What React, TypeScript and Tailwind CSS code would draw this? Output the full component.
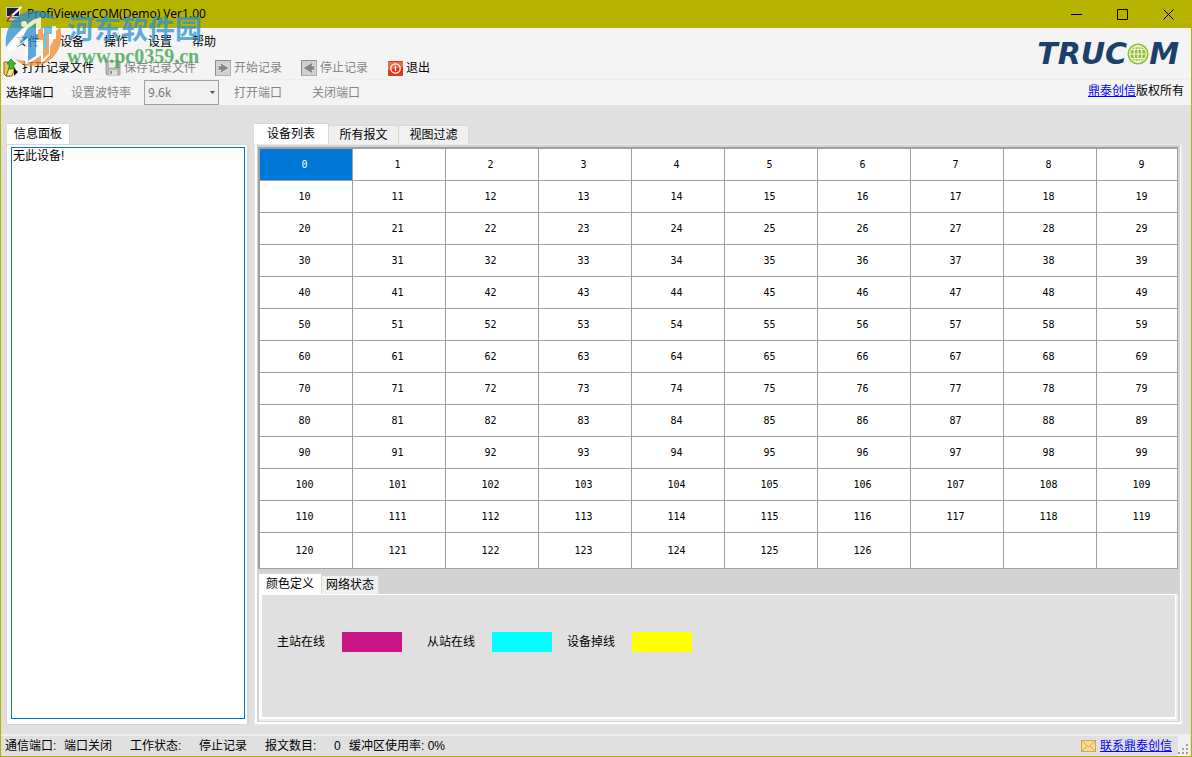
import React, { useState } from 'react';
import clsx from 'clsx';

const MENUS = ['文件', '设备', '操作', '设置', '帮助'];
const DEVICE_TABS = ['设备列表', '所有报文', '视图过滤'];
const LEGEND_TABS = ['颜色定义', '网络状态'];
const LEGEND = [
  { label: '主站在线', color: 'bg-[#c71585]', space: 'mr-[25px]' },
  { label: '从站在线', color: 'bg-[#00ffff]', space: 'mr-[15px]' },
  { label: '设备掉线', color: 'bg-[#ffff00]', space: '' },
];
const LAST_DEVICE = 126;
const ROWS = Array.from({ length: 13 }, (_, row) => Array.from({ length: 10 }, (_, col) => row * 10 + col));

const AppIcon = () => (
  <svg width="16" height="16" viewBox="0 0 16 16">
    <rect x="0.5" y="1.5" width="13" height="9" fill="#1c2030" stroke="#c8c8d8" />
    <path d="M3 12h9l2 3H1z" fill="#d8d8e0" stroke="#333" strokeWidth="0.8" />
    <path d="M15 0 4 10l-2 4 3-2L16 2z" fill="#fff" />
    <path d="M6 9l-5 6" stroke="#d02020" strokeWidth="1.5" />
  </svg>
);

const OpenIcon = () => (
  <svg width="16" height="18" viewBox="0 0 16 18">
    <path d="M1 3h5l2 2v12H3l-2-2z" fill="#e9c95a" stroke="#8a6a18" />
    <path d="M3 17 6 9h6l-3 8z" fill="#f7e28e" stroke="#8a6a18" />
    <path d="M8 0l5 5h-2v5H6V5H4z" fill="#3dbb2c" stroke="#1c7a14" strokeWidth="0.7" />
    <path d="M11 9l4 4-4 4z" fill="#111" />
  </svg>
);

const SaveIcon = () => (
  <svg width="16" height="16" viewBox="0 0 16 16">
    <path d="M1 1h14v14H2l-1-1z" fill="#b4b4b4" stroke="#a0a0a0" />
    <rect x="4" y="1.5" width="8" height="6" fill="#ececec" />
    <rect x="4" y="10" width="8" height="5" fill="#dedede" />
    <rect x="5" y="11" width="2" height="3" fill="#8c8c8c" />
  </svg>
);

const RecordIcon = ({ back }: { back?: boolean }) => (
  <svg width="16" height="16" viewBox="0 0 16 16">
    <rect x="0.5" y="0.5" width="15" height="15" fill="#d0d0d0" stroke="#b0b0b0" />
    <path d="M0.5 15.5V0.500H15.500" fill="none" stroke="#8c8c8c" />
    {back ? (
      <path d="M2 8l10-6-1 4h4l-2 2 2 2h-4l1 4z" fill="#858585" stroke="#efefef" strokeWidth="0.6" />
    ) : (
      <path d="M14 8 4 2l2 4H1l3 2-3 2h5l-2 4z" fill="#858585" stroke="#efefef" strokeWidth="0.6" />
    )}
  </svg>
);

const ExitIcon = () => (
  <svg width="15" height="15" viewBox="0 0 15 15">
    <rect width="15" height="15" rx="1" fill="#d8391b" />
    <path d="M0 1h15v5L0 9z" fill="#ee6a48" />
    <circle cx="7.5" cy="7.5" r="4.7" fill="none" stroke="#fff" strokeWidth="1.3" />
    <path d="M7.5 5v5" stroke="#fff" strokeWidth="1.3" />
  </svg>
);

const GlobeIcon = () => (
  <svg width="22" height="22" viewBox="0 0 22 22" fill="none" stroke="#f4f4f4" strokeWidth="1.2">
    <circle cx="11" cy="11" r="10.5" fill="#8fc31f" stroke="none" />
    <circle cx="11" cy="11" r="8.3" />
    <ellipse cx="11" cy="11" rx="4" ry="8.3" />
    <path d="M11 2.700v16.600M3 11h16M4.500 6.500h13M4.500 15.500h13" />
  </svg>
);

const MailIcon = () => (
  <svg width="15" height="12" viewBox="0 0 15 12">
    <rect x="0.5" y="0.5" width="14" height="11" fill="#f6dc8c" stroke="#c9a862" />
    <path d="M1 11l5-5M14 11 9 6M1 1l6.500 6L14 1" fill="none" stroke="#c49a48" strokeWidth="0.8" />
  </svg>
);

const Grip = () => (
  <svg width="12" height="12" viewBox="0 0 12 12" fill="#a0a0a0">
    <path d="M8 0h2v2H8zM8 4h2v2H8zM4 4h2v2H4zM8 8h2v2H8zM4 8h2v2H4zM0 8h2v2H0z" />
  </svg>
);

const Watermark = () => (
  <div className="pointer-events-none absolute left-1 top-2.5 flex gap-0.5 opacity-75">
    <svg width="60" height="58" viewBox="0 0 60 58">
      <path d="M1 37C-1 18 10 2 28 1c10-1 19 4 24 9-9-3-17-3-25 1C16 18 9 27 1 37z" fill="#2a8fd0" />
      <path d="M55 17c4 14-1 28-13 35-11 6-24 5-32-3 9 3 19 2 27-4 9-7 13-16 13-23z" fill="#f08a2c" />
      <path
        d="M2 41C11 27 17 17 28 10l8-3v14l9-5h6v13h-6v16l-9 9V35h-5v14l-11 6V31C14 37 8 41 2 41z"
        fill="#fff"
      />
      <path d="M22 19l9-6v11h6v6h-6v16l-8 5V28l-9 6z" fill="#2a8fd0" />
      <path d="M33 20l5-3v7h6v20l-6 5V30h-5z" fill="#f08a2c" />
      <path d="M39 16h8v8h-5v13l-3 3z" fill="#4ab0e0" />
      <circle cx="19" cy="14" r="3" fill="#fff" />
    </svg>
    <div className="pt-1 font-bold">
      <div className="text-[27px] leading-8 text-[#2a91d6]">河东软件园</div>
      <div className="font-['Liberation_Serif',serif] text-[20px] leading-5 text-[#35a045]">www.pc0359.cn</div>
    </div>
  </div>
);

interface ToolProps {
  icon?: React.ReactNode;
  label: string;
  disabled?: boolean;
  className?: string;
}

const Tool: React.FC<ToolProps> = ({ icon, label, disabled, className }) => (
  <button type="button" disabled={disabled} className={clsx('flex items-center gap-[3px] disabled:text-[#858585]', className)}>
    {icon}
    {label}
  </button>
);

interface TabsProps {
  names: string[];
  active: string;
  onSelect: (name: string) => void;
  className?: string;
  tabClass: string;
}

const Tabs: React.FC<TabsProps> = ({ names, active, onSelect, className, tabClass }) => (
  <div role="tablist" className={clsx('flex items-end leading-4', className)}>
    {names.map((name) => (
      <button
        key={name}
        type="button"
        role="tab"
        aria-selected={name === active}
        onClick={() => onSelect(name)}
        className={clsx(
          'border-t border-r border-[#d8d8d8]',
          tabClass,
          name === active ? 'h-[21px] bg-white pb-px' : 'h-[19px] bg-[#f0f0f0]',
        )}
      >
        {name}
      </button>
    ))}
  </div>
);

export default function App() {
  const [deviceTab, setDeviceTab] = useState(DEVICE_TABS[0]);
  const [legendTab, setLegendTab] = useState(LEGEND_TABS[0]);
  const [selected, setSelected] = useState(0);

  return (
    <div className="relative flex min-h-screen flex-col border-x border-b border-[#b5b300] bg-[#e0e0e0] font-['Liberation_Sans','Noto_Sans_CJK_SC',sans-serif] text-[12px] leading-4 text-black">
      <header className="flex h-7 items-center bg-[#b5b300] pl-[5px]">
        <AppIcon />
        <h1 className="ml-[5px] flex-1 font-['Noto_Sans',sans-serif] text-[12px]">ProfiViewerCOM(Demo) Ver1.00</h1>
        <div className="flex">
          {[
            { name: '最小化', d: 'M0 5.5h11' },
            { name: '最大化', d: 'M0.5 0.5h10v10h-10z' },
            { name: '关闭', d: 'M0.5 0.5l10 10M10.5 0.5l-10 10' },
          ].map((control) => (
            <button key={control.name} type="button" aria-label={control.name} className="flex h-7 w-[46px] items-center justify-center">
              <svg width="11" height="11" viewBox="0 0 11 11" fill="none" stroke="#000">
                <path d={control.d} />
              </svg>
            </button>
          ))}
        </div>
      </header>

      <div className="flex h-[51px] justify-between bg-[#f4f4f4]">
        <div>
          <nav className="flex h-7 items-center gap-5 pl-[15px]">
            {MENUS.map((menu) => (
              <button key={menu} type="button">{menu}</button>
            ))}
          </nav>
          <div className="flex h-6 items-center pl-0.5">
            <Tool icon={<OpenIcon />} label="打开记录文件" />
            <Tool icon={<SaveIcon />} label="保存记录文件" disabled className="ml-[11px]" />
            <Tool icon={<RecordIcon />} label="开始记录" disabled className="ml-[19px]" />
            <Tool icon={<RecordIcon back />} label="停止记录" disabled className="ml-[19px]" />
            <Tool icon={<ExitIcon />} label="退出" className="ml-5" />
          </div>
        </div>
        <div className="flex items-center pr-3 font-['DejaVu_Sans',sans-serif] text-[30px] font-bold italic leading-8 text-[#1b416b]">
          TRUC
          <GlobeIcon />
          M
        </div>
      </div>

      <div className="flex h-[26px] items-center border-t border-[#eeeeee] bg-[#f4f4f4] pl-[5px] pr-[7px]">
        <Tool label="选择端口" />
        <label htmlFor="baud" className="ml-[17px] text-[#858585]">设置波特率</label>
        <div className="relative ml-[13px]">
          <select
            id="baud"
            disabled
            className="block h-[25px] w-[75px] appearance-none border border-[#a0a0a0] bg-[#f0f0f0] pl-[3px] font-['Noto_Sans',sans-serif] text-[12px] text-[#787878]"
          >
            <option>9.6k</option>
          </select>
          <svg width="5" height="3" viewBox="0 0 5 3" className="pointer-events-none absolute right-1 top-[11px]">
            <path d="M0 0h5L2.5 3z" fill="#555" />
          </svg>
        </div>
        <Tool label="打开端口" disabled className="ml-[15px]" />
        <Tool label="关闭端口" disabled className="ml-[30px]" />
        <p className="ml-auto pb-1">
          <a href="#trucom" className="text-[#0000ff] underline">鼎泰创信</a>版权所有
        </p>
      </div>

      <main className="flex flex-1 gap-[5px] pb-[9px] pl-[5px] pr-2 pt-[18px]">
        <section className="flex w-[243px] flex-col">
          <Tabs names={['信息面板']} active="信息面板" onSelect={() => {}} className="pl-px" tabClass="w-[63px]" />
          <div className="flex flex-1 border border-r-2 border-[#d8d8d8] bg-white pb-[5px] pl-1 pr-0.5 pt-0.5">
            <textarea
              readOnly
              aria-label="信息面板"
              defaultValue="无此设备!"
              className="flex-1 resize-none border border-[#0078d7] bg-white px-px leading-4 outline-none"
            />
          </div>
        </section>

        <section className="flex min-w-0 flex-1 flex-col">
          <Tabs names={DEVICE_TABS} active={deviceTab} onSelect={setDeviceTab} tabClass="w-[70px] first:w-[75px]" />
          <div className="flex flex-1 flex-col border border-r-2 border-[#e8e8e8] bg-white pb-0.5 pl-0.5 pr-px">
            <div className="flex flex-1 flex-col border border-t-2 border-r-2 border-[#d3d3d3] bg-[#d3d3d3]">
              <table className="w-full table-fixed border-separate border-spacing-0 border-l-2 border-t-2 border-[#a0a0a0] bg-white text-center font-['DejaVu_Sans_Mono',monospace] text-[10px]">
                <colgroup>
                  {ROWS[0].map((col) => (
                    <col key={col} className={col < 9 ? 'w-[93px]' : ''} />
                  ))}
                </colgroup>
                <tbody>
                  {ROWS.map((row) => (
                    <tr key={row[0]} className="h-8 last:h-9">
                      {row.map((id) => (
                        <td
                          key={id}
                          onClick={() => id <= LAST_DEVICE && setSelected(id)}
                          className={clsx(
                            'border-b border-r border-[#a0a0a0] p-0 pr-[3px] pt-px last:pr-0 last:pl-[9px]',
                            id === selected && 'bg-[#0078d7] text-white',
                          )}
                        >
                          {id <= LAST_DEVICE ? id : ''}
                        </td>
                      ))}
                    </tr>
                  ))}
                </tbody>
              </table>

              <div className="flex flex-1 flex-col pl-px pt-1">
                <Tabs names={LEGEND_TABS} active={legendTab} onSelect={setLegendTab} tabClass="w-[57px] first:w-[63px]" />
                <div className="flex flex-1 flex-col border-b-2 border-r-2 border-[#eeeeee]">
                  <div className="flex flex-1 items-start border border-b-2 border-l-[3px] border-white bg-[#e0e0e0] pl-[15px] pt-[37px]">
                    {LEGEND.map((item) => (
                      <div key={item.label} className={clsx('flex items-center gap-[17px]', item.space)}>
                        <span>{item.label}</span>
                        <span className={clsx('h-5 w-[60px]', item.color)} />
                      </div>
                    ))}
                  </div>
                </div>
              </div>
            </div>
          </div>
        </section>
      </main>

      <footer className="flex h-[22px] items-center border-t-2 border-[#eeeeee] pl-1 pr-px">
        <span className="w-[59px]">通信端口:</span>
        <span className="w-[66px]">端口关闭</span>
        <span className="w-[69px]">工作状态:</span>
        <span className="w-[66px]">停止记录</span>
        <span className="w-[69px]">报文数目:</span>
        <span className="w-[15px]">0</span>
        <span>缓冲区使用率: 0%</span>
        <a href="#contact" className="ml-auto flex items-center gap-1 text-[#0000ff] underline">
          <MailIcon />
          联系鼎泰创信
        </a>
        <div className="ml-1.5 flex h-full items-end bg-[#f0f0f0]">
          <Grip />
        </div>
      </footer>

      <Watermark />
    </div>
  );
}
